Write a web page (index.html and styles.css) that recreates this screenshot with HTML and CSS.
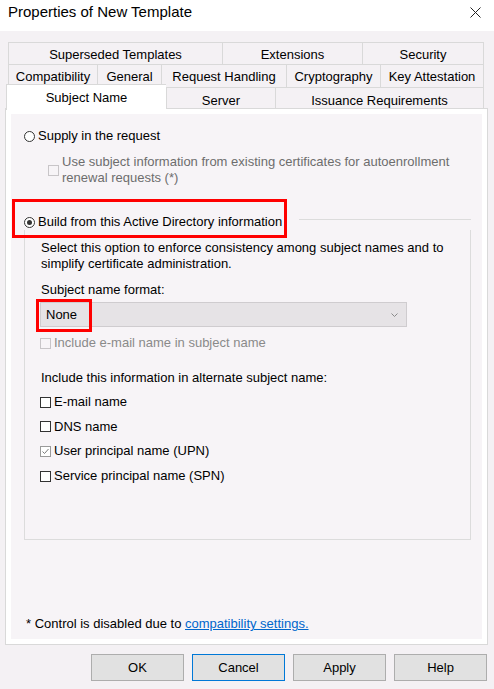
FILE: index.html
```html
<!DOCTYPE html>
<html>
<head>
<meta charset="utf-8">
<link rel="stylesheet" href="styles.css">
</head>
<body>
<div class="dialog">
  <div class="titlebar">
    <div class="title">Properties of New Template</div>
    <svg class="close" width="11" height="11" viewBox="0 0 11 11"><path d="M0.5 0.5 L10.5 10.5 M10.5 0.5 L0.5 10.5" stroke="#222" stroke-width="1" fill="none"/></svg>
  </div>

  <div class="tabs">
    <div class="tab-row row1">
      <div class="tab">Superseded Templates</div>
      <div class="tab">Extensions</div>
      <div class="tab">Security</div>
    </div>
    <div class="tab-row row2">
      <div class="tab">Compatibility</div>
      <div class="tab">General</div>
      <div class="tab">Request Handling</div>
      <div class="tab">Cryptography</div>
      <div class="tab">Key Attestation</div>
    </div>
    <div class="tab-row row3">
      <div class="tab active">Subject Name</div>
      <div class="tab">Server</div>
      <div class="tab">Issuance Requirements</div>
    </div>
  </div>

  <div class="panel">
    <div class="page">
      <div class="opt">
        <span class="radio"></span>
        <span>Supply in the request</span>
      </div>
      <div class="opt sub">
        <span class="cb disabled"></span>
        <span class="dim">Use subject information from existing certificates for autoenrollment<br>renewal requests (*)</span>
      </div>

      <div class="group">
        <div class="group-head">
          <div class="opt hl">
            <span class="radio on"></span>
            <span>Build from this Active Directory information</span>
            <span class="redbox rb1"></span>
          </div>
          <span class="group-line"></span>
        </div>
        <div class="group-body">
          <p class="desc">Select this option to enforce consistency among subject names and to<br>simplify certificate administration.</p>
          <div class="lbl">Subject name format:</div>
          <div class="select">
            <span>None</span>
            <svg width="7" height="4" viewBox="0 0 7 4"><path d="M0.5 0.5 L3.5 3.5 L6.5 0.5" stroke="#8a8a8a" stroke-width="1" fill="none"/></svg>
            <span class="redbox rb2"></span>
          </div>
          <div class="opt chk email">
            <span class="cb disabled"></span>
            <span class="dim2">Include e-mail name in subject name</span>
          </div>
          <div class="lbl alt">Include this information in alternate subject name:</div>
          <div class="checks">
            <div class="opt chk"><span class="cb"></span><span>E-mail name</span></div>
            <div class="opt chk"><span class="cb"></span><span>DNS name</span></div>
            <div class="opt chk"><span class="cb checked"><svg width="9" height="9" viewBox="0 0 9 9"><path d="M1.5 4.5 L3.5 6.5 L7.5 2" stroke="#7a7a7a" stroke-width="1" fill="none"/></svg></span><span>User principal name (UPN)</span></div>
            <div class="opt chk"><span class="cb"></span><span>Service principal name (SPN)</span></div>
          </div>
        </div>
      </div>

      <div class="footer">* Control is disabled due to <a class="link">compatibility settings.</a></div>
    </div>
  </div>

  <div class="buttons">
    <button class="btn">OK</button>
    <button class="btn focus">Cancel</button>
    <button class="btn">Apply</button>
    <button class="btn">Help</button>
  </div>
</div>
</body>
</html>
```

FILE: styles.css
```css
body {
  margin: 0;
  font-family: "Liberation Sans", Arial, sans-serif;
  font-size: 13px;
  color: #000;
  background: #f4f1f4;
}

.dialog {
  width: 494px;
  height: 689px;
  display: flex;
  flex-direction: column;
}

.titlebar {
  height: 31px;
  background: #fff;
  display: flex;
  justify-content: space-between;
  align-items: flex-start;
  flex: none;
}

.title {
  font-size: 15px;
  line-height: 20px;
  padding: 2px 0 0 8px;
}

.close {
  margin: 7px 13px 0 0;
}

.tabs {
  margin-top: 11px;
}

.tab-row {
  display: grid;
}

.row1 {
  margin-left: 8px;
  grid-template-columns: 214px 140px 122px;
  height: 22px;
}

.row2 {
  margin-left: 8px;
  grid-template-columns: 89px 64px 125px 94px 104px;
  height: 23px;
}

.row3 {
  margin-left: 6px;
  grid-template-columns: 160px 109px 209px;
  height: 21px;
}

.tab {
  border-top: 1px solid #d9d9d9;
  border-left: 1px solid #d9d9d9;
  display: flex;
  align-items: center;
  justify-content: center;
  white-space: nowrap;
  padding-top: 1px;
}

.row3 .tab {
  padding-top: 4px;
}

.tab:last-child {
  border-right: 1px solid #d9d9d9;
}

.row3 .tab.active {
  background: #fff;
  margin: -3px 0 -2px 0;
  position: relative;
  z-index: 1;
  padding-top: 0;
}

.panel {
  margin-left: 5px;
  width: 483px;
  height: 537px;
  box-sizing: border-box;
  border: 1px solid #d9d9d9;
  background: #fff;
  padding: 5px;
  flex: none;
}

.page {
  height: 100%;
  box-sizing: border-box;
  background: #f7f4f7;
  display: flex;
  flex-direction: column;
  padding: 14px 0 7px 13px;
}

.opt {
  display: flex;
  align-items: center;
  gap: 3px;
  line-height: 16px;
}

.radio {
  width: 11px;
  height: 11px;
  box-sizing: border-box;
  border: 1px solid #333;
  border-radius: 50%;
  background: #fff;
  flex: none;
  display: grid;
  place-items: center;
}

.radio.on::after {
  content: "";
  width: 5px;
  height: 5px;
  border-radius: 50%;
  background: #333;
}

.cb {
  width: 11px;
  height: 11px;
  box-sizing: border-box;
  border: 1px solid #333;
  background: #fff;
  flex: none;
  display: grid;
  place-items: center;
}

.cb.disabled {
  border-color: #c8c5c8;
  background: transparent;
}

.cb.checked {
  border-color: #9a9a9a;
}

.cb svg {
  display: block;
}

.dim {
  color: #6d6d6d;
}

.dim2 {
  color: #8a8a8a;
}

.sub {
  margin: 10px 0 0 24px;
}

.group {
  margin-top: 28px;
  width: 447px;
}

.group-head {
  display: flex;
  height: 16px;
}

.hl {
  position: relative;
}

.group-line {
  flex: 1;
  height: 0;
  border-top: 1px solid #dcdcdc;
  margin: 5px 0 0 17px;
}

.redbox {
  position: absolute;
  box-sizing: border-box;
  border: 3px solid #f00;
  z-index: 2;
}

.rb1 {
  left: -12px;
  top: -15px;
  width: 275px;
  height: 39px;
}

.rb2 {
  left: -5px;
  top: -4px;
  width: 56px;
  height: 33px;
}

.group-body {
  border: 1px solid #dcdcdc;
  border-top: none;
  padding: 10px 0 55px 16px;
}

.desc {
  margin: 0;
  line-height: 16px;
}

.lbl {
  margin-top: 10px;
  line-height: 16px;
}

.lbl.alt {
  margin-top: 19px;
}

.select {
  position: relative;
  margin: 4px 0 0 -1px;
  width: 367px;
  height: 25px;
  box-sizing: border-box;
  border: 1px solid #cfcccf;
  background: #e6e3e6;
  display: flex;
  align-items: center;
  justify-content: space-between;
  padding: 0 8px 0 5px;
}

.chk {
  margin-left: -1px;
}

.email {
  margin-top: 8px;
}

.checks {
  display: flex;
  flex-direction: column;
  gap: 8.7px;
  margin-top: 8px;
}

.footer {
  margin-top: auto;
  margin-left: 2px;
  line-height: 16px;
}

.link {
  color: #0066cc;
  text-decoration: underline;
}

.buttons {
  display: flex;
  justify-content: flex-end;
  gap: 8px;
  padding-right: 7px;
  margin-top: 9px;
}

.btn {
  width: 93px;
  height: 27px;
  box-sizing: border-box;
  border: 1px solid #adadad;
  background: #e1e1e1;
  font: inherit;
  color: #000;
  display: flex;
  align-items: center;
  justify-content: center;
  padding: 0;
}

.btn.focus {
  border-color: #0078d7;
}
```
